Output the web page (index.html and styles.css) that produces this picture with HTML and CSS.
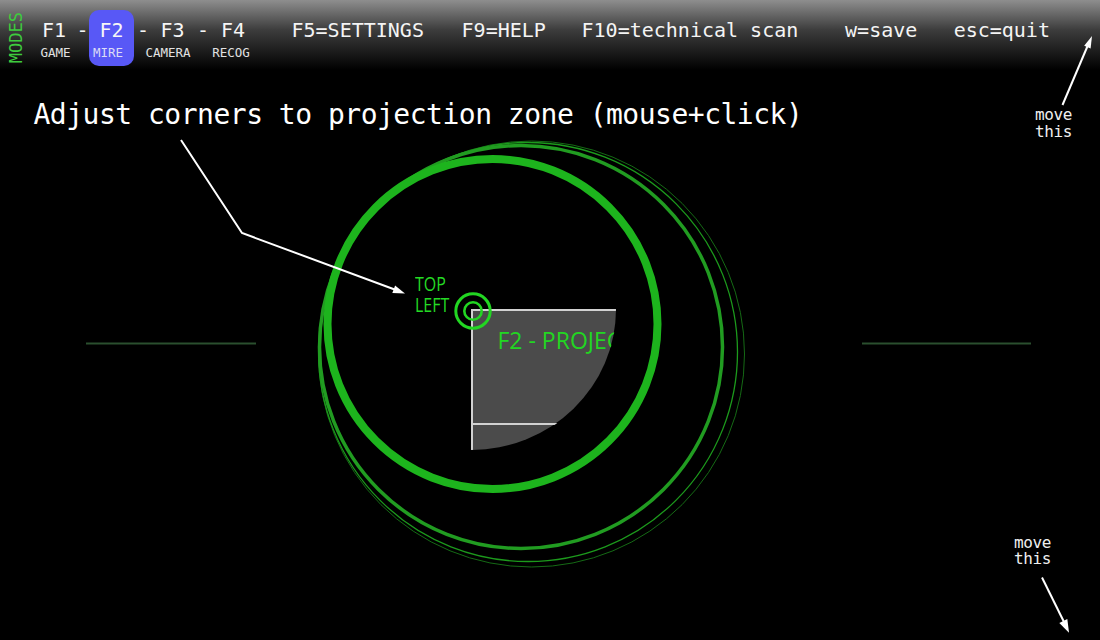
FILE: index.html
```html
<!DOCTYPE html>
<html lang="en">
<head>
<meta charset="utf-8">
<title>MIRE - projection zone</title>
<link rel="stylesheet" href="styles.css">
</head>
<body>
<div class="app">
  <header class="topbar">
    <div class="modes">MODES</div>
    <div class="key k1"><span class="fk">F1</span><span class="lbl">GAME</span></div>
    <span class="dash d1">-</span>
    <div class="key active"><span class="fk">F2</span><span class="lbl">MIRE</span></div>
    <span class="dash d2">-</span>
    <div class="key k3"><span class="fk">F3</span><span class="lbl">CAMERA</span></div>
    <span class="dash d3">-</span>
    <div class="key k4"><span class="fk">F4</span><span class="lbl">RECOG</span></div>
    <span class="cmd c5">F5=SETTINGS</span>
    <span class="cmd c9">F9=HELP</span>
    <span class="cmd c10">F10=technical scan</span>
    <span class="cmd cw">w=save</span>
    <span class="cmd cesc">esc=quit</span>
  </header>
  <main class="stage">
    <p class="instructions">Adjust corners to projection zone (mouse+click)</p>
    <div class="zone">
      <span class="zone-title">F2 - PROJECTION ZONE</span>
      <div class="zone-rule"></div>
    </div>
    <div class="corner-label"><span class="cl-line">TOP</span><span class="cl-line">LEFT</span></div>
    <div class="move move-top"><span class="mv-line">move</span><span class="mv-line">this</span></div>
    <div class="move move-bottom"><span class="mv-line">move</span><span class="mv-line">this</span></div>
    <svg class="overlay" width="1100" height="640" viewBox="0 0 1100 640" xmlns="http://www.w3.org/2000/svg">
      <line x1="86" y1="343.5" x2="256" y2="343.5" stroke="#2a4f2e" stroke-width="2"/>
      <line x1="862" y1="343.5" x2="1031" y2="343.5" stroke="#2a4f2e" stroke-width="2"/>
      <circle cx="531.5" cy="354" r="213" fill="none" stroke="#156a15" stroke-width="1"/>
      <circle cx="528" cy="352" r="209.5" fill="none" stroke="#1c9a1c" stroke-width="1.3"/>
      <circle cx="521" cy="347" r="201.5" fill="none" stroke="#219c21" stroke-width="3.5"/>
      <circle cx="492.5" cy="324" r="165" fill="none" stroke="#1db41d" stroke-width="8"/>
      <circle cx="473" cy="311" r="17.2" fill="none" stroke="#22d622" stroke-width="3"/>
      <circle cx="473" cy="311" r="8.7" fill="none" stroke="#22d622" stroke-width="2.6"/>
      <polyline points="181,140 242,233 396,290" fill="none" stroke="#fff" stroke-width="2"/>
      <polygon points="405,293.5 395.1,285.6 392.3,293.1" fill="#fff"/>
      <line x1="1062.5" y1="105" x2="1088" y2="45" stroke="#fff" stroke-width="2"/>
      <polygon points="1092,36 1090.6,48.5 1084.2,45.7" fill="#fff"/>
      <line x1="1042" y1="577.5" x2="1064" y2="622" stroke="#fff" stroke-width="2"/>
      <polygon points="1069,632.7 1059.3,623 1067.3,619" fill="#fff"/>
    </svg>
  </main>
</div>
</body>
</html>
```
FILE: styles.css
```css
html, body {
  margin: 0;
  padding: 0;
  background: #000;
  overflow: hidden;
}

.app {
  position: relative;
  width: 1100px;
  height: 640px;
  display: flex;
  flex-direction: column;
  background: #000;
  font-family: "DejaVu Sans Mono", "Liberation Mono", monospace;
  color: #f4f4f4;
}

/* ---------- top bar ---------- */
.topbar {
  display: flex;
  align-items: flex-start;
  height: 76px;
  flex: 0 0 76px;
  box-sizing: border-box;
  padding-top: 10px;
  background: linear-gradient(to bottom, #8e8e8e 0px, #3c3c3c 30px, #000 70px);
}

.modes {
  writing-mode: vertical-rl;
  transform: rotate(180deg);
  margin-left: 8px;
  margin-top: 2px;
  width: 16px;
  line-height: 16px;
  font-size: 17px;
  color: #3ecb3e;
}

.key {
  display: flex;
  flex-direction: column;
  align-items: center;
  width: 24px;
  padding-top: 10px;
  box-sizing: border-box;
}

.fk {
  font-size: 20px;
  line-height: 20px;
  color: #f6f6f6;
}

.lbl {
  margin-top: 5.5px;
  font-size: 12.5px;
  line-height: 13px;
  white-space: nowrap;
  color: #e2e2e2;
}

.k1 { margin-left: 18px; }
.k1 .lbl { margin-left: 3px; }

.key.active {
  width: 45px;
  height: 56px;
  margin-left: 0.5px;
  border-radius: 10px;
  background: #5858f6;
}
.key.active .lbl { margin-right: 7px; color: #dcdcf6; }

.k3 { margin-left: 11.5px; }
.k3 .lbl { margin-right: 9px; }
.k4 { margin-left: 12px; }
.k4 .lbl { margin-right: 4px; }

.dash {
  width: 12px;
  padding-top: 10px;
  font-size: 20px;
  line-height: 20px;
  text-align: center;
}
.d1 { margin-left: 10.5px; }
.d2 { margin-left: 3px; }
.d3 { margin-left: 12.5px; }

.cmd {
  padding-top: 10px;
  font-size: 20px;
  line-height: 20px;
  white-space: pre;
}
.c5 { margin-left: 46.5px; }
.c9 { margin-left: 37.6px; }
.c10 { margin-left: 35.7px; }
.cw { margin-left: 46.8px; }
.cesc { margin-left: 36.3px; }

/* ---------- stage ---------- */
.stage {
  flex: 1;
}

.instructions {
  margin: 0;
  padding: 22.6px 0 0 33.5px;
  font-size: 28px;
  line-height: 32px;
  letter-spacing: -0.5px;
  color: #fff;
  white-space: pre;
}

.zone {
  position: absolute;
  left: 471px;
  top: 309px;
  width: 145px;
  height: 141px;
  box-sizing: border-box;
  background: #4b4b4b;
  border-top: 2px solid #d2d2d2;
  border-left: 2px solid #d2d2d2;
  border-bottom-right-radius: 145px 141px;
  overflow: hidden;
}

.zone-title {
  position: absolute;
  left: 24.5px;
  top: 17.4px;
  font-family: "Open Sans", "Noto Sans", sans-serif;
  font-size: 23px;
  line-height: 24px;
  color: #22d622;
  white-space: nowrap;
}

.zone-rule {
  position: absolute;
  left: 0;
  right: 0;
  top: 112px;
  height: 2px;
  background: #d2d2d2;
}

.corner-label {
  position: absolute;
  left: 415px;
  top: 272.7px;
  display: flex;
  flex-direction: column;
  font-family: "Open Sans", "Noto Sans", sans-serif;
  font-size: 20px;
  line-height: 21px;
  color: #24da24;
  transform: scaleX(0.8);
  transform-origin: left top;
}

.move {
  position: absolute;
  width: 50px;
  display: flex;
  flex-direction: column;
  align-items: center;
  font-size: 16px;
  line-height: 16.5px;
  letter-spacing: -0.4px;
  color: #efefef;
}
.move-top { left: 1028.5px; top: 107px; }
.move-bottom { left: 1007.5px; top: 534.5px; }

.overlay {
  position: absolute;
  left: 0;
  top: 0;
  pointer-events: none;
}
```
